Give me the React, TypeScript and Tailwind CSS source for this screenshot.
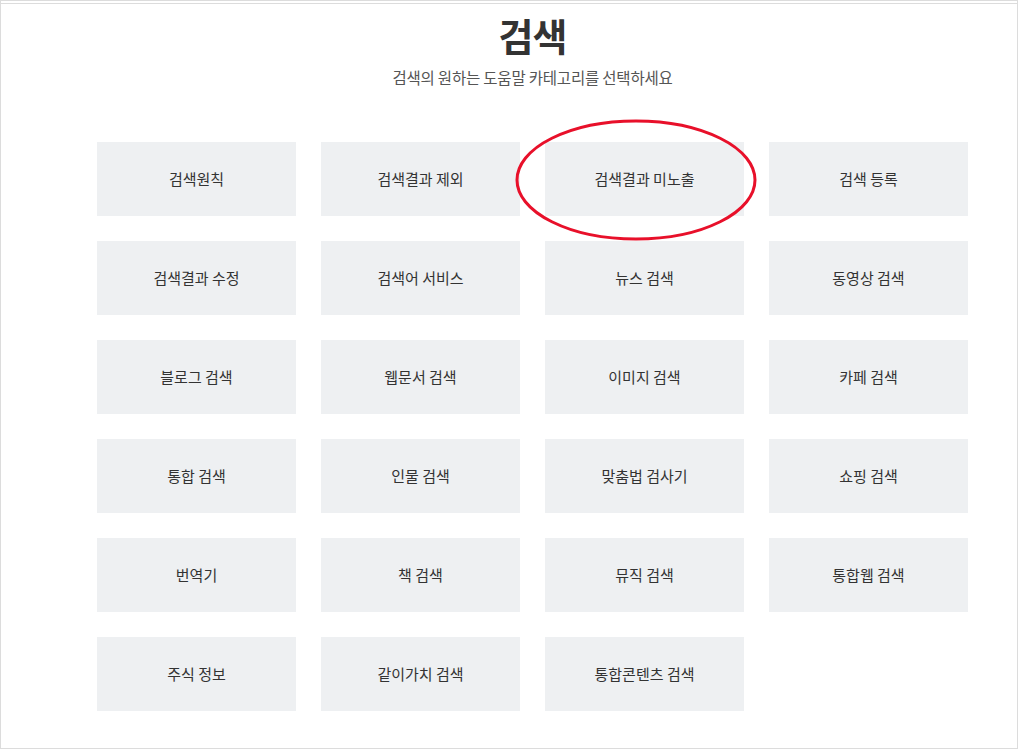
import React from "react";

const ITEMS = [
  "검색원칙",
  "검색결과 제외",
  "검색결과 미노출",
  "검색 등록",
  "검색결과 수정",
  "검색어 서비스",
  "뉴스 검색",
  "동영상 검색",
  "블로그 검색",
  "웹문서 검색",
  "이미지 검색",
  "카페 검색",
  "통합 검색",
  "인물 검색",
  "맞춤법 검사기",
  "쇼핑 검색",
  "번역기",
  "책 검색",
  "뮤직 검색",
  "통합웹 검색",
  "주식 정보",
  "같이가치 검색",
  "통합콘텐츠 검색",
];

export default function App() {
  return (
    <div
      className="w-[1018px] h-[749px] bg-white border border-[#dcdcdc] overflow-hidden"
      style={{ fontFamily: "'Noto Sans CJK KR', 'Noto Sans', sans-serif" }}
    >
      <div className="mt-[2px] border-t border-[#dcdcdc]">
        <div className="ml-[96px] w-[871px]">
          {/* Header */}
          <div className="flex flex-col items-center">
            <h1 className="mt-[6px] h-[50px] text-[38px] leading-[50px] font-bold tracking-[-1px] text-[#333]">
              검색
            </h1>
            <p className="mt-[6px] text-[15.5px] leading-[22px] text-[#555] tracking-[-0.2px]">
              검색의 원하는 도움말 카테고리를 선택하세요
            </p>
          </div>

          {/* Category grid */}
          <div className="mt-[54px] grid grid-cols-[repeat(4,199px)] gap-[25px]">
            {ITEMS.map((label, i) => (
              <div
                key={label}
                className="relative h-[74px] bg-[#eef0f2] flex items-center justify-center text-[15px] text-[#333]"
              >
                {label}
                {i === 2 && (
                  <svg
                    className="absolute left-[-30px] top-[-24px] pointer-events-none"
                    width="244"
                    height="124"
                    viewBox="0 0 244 124"
                  >
                    <ellipse
                      cx="121"
                      cy="62"
                      rx="119"
                      ry="59"
                      fill="none"
                      stroke="#e8102a"
                      strokeWidth="3"
                    />
                  </svg>
                )}
              </div>
            ))}
          </div>
        </div>
      </div>
    </div>
  );
}
